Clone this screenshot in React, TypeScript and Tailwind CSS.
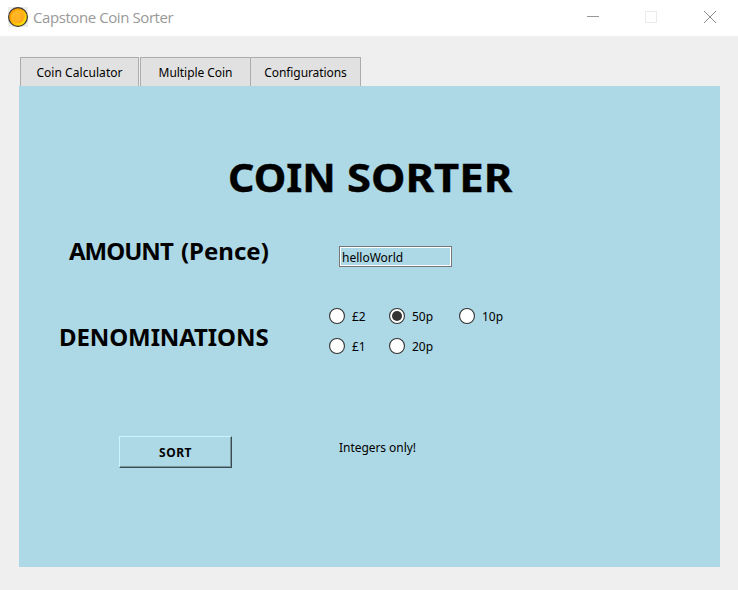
import { useState } from "react";

function CoinIcon() {
  return (
    <svg width="20" height="20" viewBox="0 0 20 20" className="block shrink-0">
      <defs>
        <linearGradient id="rim" x1="0" y1="0" x2="1" y2="1">
          <stop offset="0.1" stopColor="#ff9200" />
          <stop offset="0.5" stopColor="#ffb400" />
          <stop offset="0.85" stopColor="#ffe800" />
        </linearGradient>
        <linearGradient id="face" x1="0" y1="0" x2="1" y2="1">
          <stop offset="0" stopColor="#ffc02c" />
          <stop offset="1" stopColor="#ff9d18" />
        </linearGradient>
      </defs>
      <rect width="20" height="20" fill="#ececec" />
      <circle cx="10" cy="10" r="9.4" fill="url(#rim)" stroke="#3b3a3c" strokeWidth="1.2" />
      <circle cx="10" cy="10" r="6.3" fill="url(#face)" stroke="#ffc21c" strokeWidth="0.7" />
      <path d="M12 7.8C11 6.6 8.2 6.8 8.2 8.4S12 10 12 11.8 8.8 13.4 8 12.2M10 6v8" fill="none" stroke="#ffba28" strokeWidth="0.9" />
    </svg>
  );
}

function Radio({ label, checked, onSelect, className }: { label: string; checked: boolean; onSelect: () => void; className: string }) {
  return (
    <button role="radio" aria-checked={checked} onClick={onSelect} className={`flex h-4 items-center gap-[7px] ${className}`}>
      <svg width="16" height="16" viewBox="0 0 16 16" className="block shrink-0">
        <circle cx="8" cy="8" r="7.45" fill="#fff" stroke="#333" strokeWidth="1.1" />
        {checked && <circle cx="8" cy="8" r="5" fill="#333" />}
      </svg>
      <span className="pt-0.5 leading-4">{label}</span>
    </button>
  );
}

export default function App() {
  const [coin, setCoin] = useState("50p");
  const radio = (label: string, className: string) => (
    <Radio label={label} checked={coin === label} onSelect={() => setCoin(label)} className={className} />
  );
  return (
    <div className="flex h-[590px] w-[738px] flex-col overflow-hidden bg-[#efefef] font-['Noto_Sans',sans-serif] text-[12px] text-black">
      <header className="flex h-9 shrink-0 items-start bg-white pl-2 text-[#999]">
        <div className="mt-[7px]">
          <CoinIcon />
        </div>
        <h1 className="mt-[7px] ml-[5px] flex-1 font-['Open_Sans',sans-serif] text-[15px] leading-5 tracking-[-0.42px] whitespace-nowrap">Capstone Coin Sorter</h1>
        <svg width="151" height="36" viewBox="587 0 151 36" fill="none" shapeRendering="crispEdges" className="block">
          <path d="M587 16.5h12" stroke="#999" />
          <rect x="645.5" y="11.5" width="11" height="11" stroke="#ebebeb" />
          <path d="M704 11l12 12M716 11l-12 12" stroke="#8c8c8c" shapeRendering="auto" />
        </svg>
      </header>

      <nav className="mt-[21px] ml-5 flex h-[29px] shrink-0">
        <button className="h-[29px] w-[119px] border border-b-0 border-[#acacac] bg-[#e1e1e1] pt-px leading-7 tracking-[0.05px] whitespace-nowrap">Coin Calculator</button>
        <button className="ml-px h-[29px] w-[111px] border border-b-0 border-[#acacac] bg-[#e1e1e1] pt-px leading-7 tracking-[-0.06px] whitespace-nowrap">Multiple Coin</button>
        <button className="-ml-px h-[29px] w-[111px] border border-b-0 border-[#acacac] bg-[#e1e1e1] pt-px leading-7 tracking-[-0.08px] whitespace-nowrap">Configurations</button>
      </nav>

      <main className="ml-[19px] flex h-[481px] w-[701px] shrink-0 flex-col bg-[#add8e6]">
        <h2 className="mt-[71px] ml-[209px] flex h-10 text-[40px] leading-10 font-bold whitespace-nowrap [-webkit-text-stroke:0.4px_black]">
          <span className="w-[119px] origin-left scale-x-[1.03]">COIN </span>
          <span className="origin-left scale-x-[1.09]">SORTER</span>
        </h2>

        <section className="mt-[39px] flex h-[72px] items-start">
          <label className="w-[270px] shrink-0 pl-[50px] text-[24px] leading-[30px] font-bold whitespace-nowrap">
            <span className="tracking-[-1px]">AMOUNT</span> <span className="ml-[2px]">(Pence)</span>
          </label>
          <div className="mt-[10px] ml-[50px] h-[21px] w-[113px] border border-[#777] bg-white p-px">
            <input
              aria-label="Amount"
              defaultValue="helloWorld"
              className="block h-[17px] w-full bg-[#add8e6] pt-[2px] pl-px leading-[15px] outline-none"
            />
          </div>
        </section>

        <section className="flex h-[128px] items-start">
          <h3 className="mt-[14px] w-[310px] shrink-0 pl-10 text-[24px] leading-[30px] font-bold tracking-[-0.1px] whitespace-nowrap">DENOMINATIONS</h3>
          <div role="radiogroup" className="flex flex-col gap-[14px]">
            <div className="flex">
              {radio("£2", "w-[60px]")}
              {radio("50p", "w-[70px]")}
              {radio("10p", "w-[60px]")}
            </div>
            <div className="flex">
              {radio("£1", "w-[60px]")}
              {radio("20p", "w-[70px]")}
            </div>
          </div>
        </section>

        <section className="flex items-start">
          <button className="ml-[100px] h-[32px] w-[113px] border border-t-[#cbf4ff] border-r-[#3c4c51] border-b-[#3c4c51] border-l-[#cbf4ff] pt-[2px] font-bold tracking-[0.5px] shadow-[inset_-1px_-1px_0_#7998a1]">SORT</button>
          <output className="mt-1 ml-[107px] leading-4 tracking-[-0.05px] whitespace-nowrap">Integers only!</output>
        </section>
      </main>
    </div>
  );
}
